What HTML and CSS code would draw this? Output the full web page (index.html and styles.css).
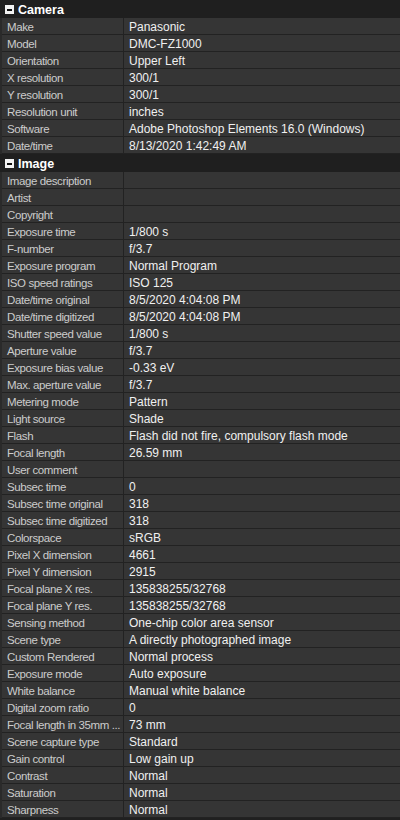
FILE: index.html
```html
<!DOCTYPE html>
<html>
<head>
<meta charset="utf-8">
<link rel="stylesheet" href="styles.css">
</head>
<body>
<div class="grid">
  <div class="section"><span class="toggle"></span><span class="title">Camera</span></div>
  <div class="row"><div class="key">Make</div><div class="val">Panasonic</div></div>
  <div class="row"><div class="key">Model</div><div class="val">DMC-FZ1000</div></div>
  <div class="row"><div class="key">Orientation</div><div class="val">Upper Left</div></div>
  <div class="row"><div class="key">X resolution</div><div class="val">300/1</div></div>
  <div class="row"><div class="key">Y resolution</div><div class="val">300/1</div></div>
  <div class="row"><div class="key">Resolution unit</div><div class="val">inches</div></div>
  <div class="row"><div class="key">Software</div><div class="val">Adobe Photoshop Elements 16.0 (Windows)</div></div>
  <div class="row"><div class="key">Date/time</div><div class="val">8/13/2020 1:42:49 AM</div></div>
  <div class="section"><span class="toggle"></span><span class="title">Image</span></div>
  <div class="row"><div class="key">Image description</div><div class="val"></div></div>
  <div class="row"><div class="key">Artist</div><div class="val"></div></div>
  <div class="row"><div class="key">Copyright</div><div class="val"></div></div>
  <div class="row"><div class="key">Exposure time</div><div class="val">1/800 s</div></div>
  <div class="row"><div class="key">F-number</div><div class="val">f/3.7</div></div>
  <div class="row"><div class="key">Exposure program</div><div class="val">Normal Program</div></div>
  <div class="row"><div class="key">ISO speed ratings</div><div class="val">ISO 125</div></div>
  <div class="row"><div class="key">Date/time original</div><div class="val">8/5/2020 4:04:08 PM</div></div>
  <div class="row"><div class="key">Date/time digitized</div><div class="val">8/5/2020 4:04:08 PM</div></div>
  <div class="row"><div class="key">Shutter speed value</div><div class="val">1/800 s</div></div>
  <div class="row"><div class="key">Aperture value</div><div class="val">f/3.7</div></div>
  <div class="row"><div class="key">Exposure bias value</div><div class="val">-0.33 eV</div></div>
  <div class="row"><div class="key">Max. aperture value</div><div class="val">f/3.7</div></div>
  <div class="row"><div class="key">Metering mode</div><div class="val">Pattern</div></div>
  <div class="row"><div class="key">Light source</div><div class="val">Shade</div></div>
  <div class="row"><div class="key">Flash</div><div class="val">Flash did not fire, compulsory flash mode</div></div>
  <div class="row"><div class="key">Focal length</div><div class="val">26.59 mm</div></div>
  <div class="row"><div class="key">User comment</div><div class="val"></div></div>
  <div class="row"><div class="key">Subsec time</div><div class="val">0</div></div>
  <div class="row"><div class="key">Subsec time original</div><div class="val">318</div></div>
  <div class="row"><div class="key">Subsec time digitized</div><div class="val">318</div></div>
  <div class="row"><div class="key">Colorspace</div><div class="val">sRGB</div></div>
  <div class="row"><div class="key">Pixel X dimension</div><div class="val">4661</div></div>
  <div class="row"><div class="key">Pixel Y dimension</div><div class="val">2915</div></div>
  <div class="row"><div class="key">Focal plane X res.</div><div class="val">135838255/32768</div></div>
  <div class="row"><div class="key">Focal plane Y res.</div><div class="val">135838255/32768</div></div>
  <div class="row"><div class="key">Sensing method</div><div class="val">One-chip color area sensor</div></div>
  <div class="row"><div class="key">Scene type</div><div class="val">A directly photographed image</div></div>
  <div class="row"><div class="key">Custom Rendered</div><div class="val">Normal process</div></div>
  <div class="row"><div class="key">Exposure mode</div><div class="val">Auto exposure</div></div>
  <div class="row"><div class="key">White balance</div><div class="val">Manual white balance</div></div>
  <div class="row"><div class="key">Digital zoom ratio</div><div class="val">0</div></div>
  <div class="row"><div class="key">Focal length in 35mm ...</div><div class="val">73 mm</div></div>
  <div class="row"><div class="key">Scene capture type</div><div class="val">Standard</div></div>
  <div class="row"><div class="key">Gain control</div><div class="val">Low gain up</div></div>
  <div class="row"><div class="key">Contrast</div><div class="val">Normal</div></div>
  <div class="row"><div class="key">Saturation</div><div class="val">Normal</div></div>
  <div class="row"><div class="key">Sharpness</div><div class="val">Normal</div></div>
</div>
</body>
</html>
```

FILE: styles.css
```css
html, body {
  margin: 0;
  padding: 0;
  background: #202020;
  width: 400px;
  height: 820px;
  overflow: hidden;
}

.grid {
  display: flex;
  flex-direction: column;
  font-family: "Liberation Sans", Arial, sans-serif;
  font-size: 12px;
}

.section {
  height: 18px;
  background: #1f1f1f;
  display: flex;
  align-items: center;
  padding-left: 5px;
  padding-top: 1px;
  gap: 4px;
  box-sizing: border-box;
}

.toggle {
  width: 9px;
  height: 9px;
  background: #f2f2f2;
  display: flex;
  align-items: center;
  justify-content: center;
}

.toggle::before {
  content: "";
  width: 5px;
  height: 2px;
  background: #111;
}

.title {
  color: #ffffff;
  font-weight: bold;
  font-size: 12.5px;
}

.row {
  height: 17px;
  display: flex;
  background: #2a2a2a;
  padding-left: 2px;
  box-sizing: border-box;
}

.key {
  width: 122px;
  flex: none;
  background: #353535;
  color: #cccccc;
  font-size: 11.5px;
  letter-spacing: -0.4px;
  border-right: 1px solid #222222;
  border-bottom: 1px solid #222222;
  padding: 2px 0 0 5px;
  line-height: 15px;
  box-sizing: border-box;
  white-space: nowrap;
  overflow: hidden;
}

.val {
  flex: 1;
  background: #353535;
  color: #f0f0f0;
  border-bottom: 1px solid #222222;
  padding: 2px 0 0 5px;
  line-height: 15px;
  box-sizing: border-box;
  white-space: nowrap;
  overflow: hidden;
}
```
